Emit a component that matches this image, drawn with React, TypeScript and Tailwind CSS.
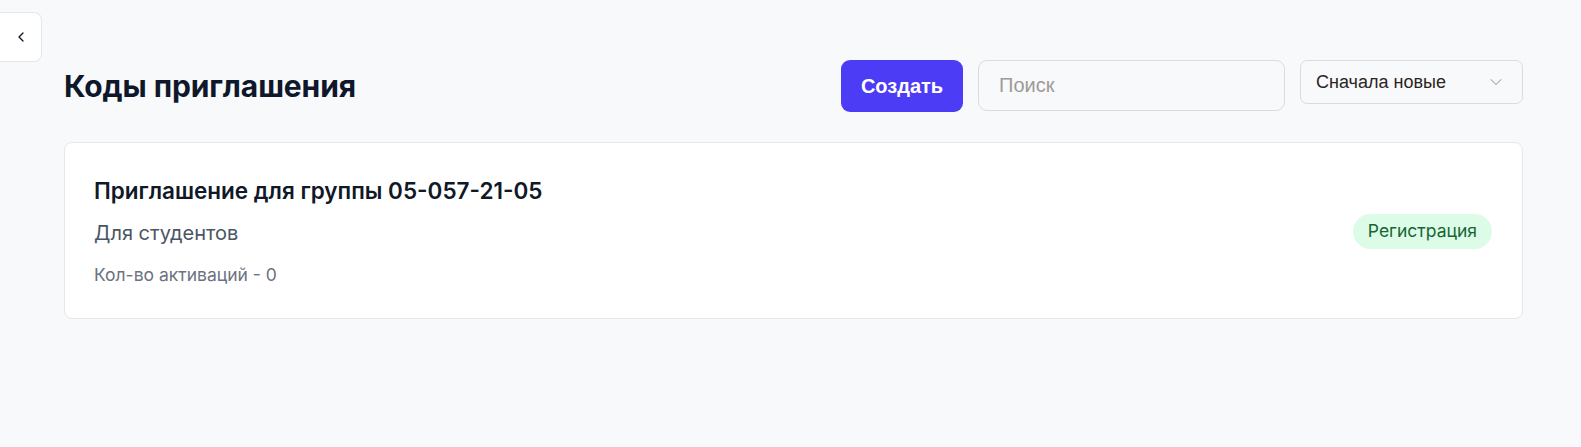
import { ChevronDown, ChevronLeft } from "lucide-react"

export default function App() {
    return (
        <div className="min-h-[447px] w-full bg-[#f8f9fb] relative font-['Inter',sans-serif] text-[#111827]">
            {/* sidebar toggle */}
            <button className="absolute left-0 top-[12px] w-[42px] h-[50px] bg-white border border-l-0 border-[#e5e7eb] rounded-r-[8px] flex items-center justify-center text-[#111827]">
                <ChevronLeft size={16} strokeWidth={2} />
            </button>

            <div className="pl-[64px] pr-[58px] pt-[60px]">
                <div className="flex items-start">
                    <h1 className="text-[30px] font-bold leading-[52px] tracking-[-0.1px] text-[#0f172a]">Коды приглашения</h1>
                    <div className="ml-auto flex items-start gap-[15px]">
                        <button className="w-[122px] h-[52px] rounded-[9px] bg-[#4c3cf6] text-white text-[20px] font-bold font-['Liberation_Sans',sans-serif]">
                            Создать
                        </button>
                        <input
                            placeholder="Поиск"
                            className="w-[307px] h-[51px] rounded-[9px] border border-[#d9dce1] bg-[#f8f9fb] px-[20px] text-[20px] font-['Liberation_Sans',sans-serif] placeholder:text-[#a09a98] outline-none"
                        />
                        <div className="w-[223px] h-[44px] rounded-[7px] border border-[#d9dce1] bg-[#f8f9fb] flex items-center pl-[15px] pr-[16px] font-['Liberation_Sans',sans-serif] text-[18px] text-[#2b2422]">
                            <span>Сначала новые</span>
                            <ChevronDown size={20} strokeWidth={1.25} className="ml-auto text-[#9ca3af]" />
                        </div>
                    </div>
                </div>

                <div className="mt-[30px] h-[177px] bg-white border border-[#e5e7eb] rounded-[8px] pl-[29px] pr-[30px] pt-[2px] flex items-center">
                    <div className="flex flex-col">
                        <div className="text-[22.5px] font-semibold text-[#111827] leading-[28px]">Приглашение для группы 05-057-21-05</div>
                        <div className="mt-[15px] text-[20px] text-[#4b5563] leading-[26px]">Для студентов</div>
                        <div className="mt-[18px] text-[17.5px] text-[#6b7280] leading-[22px]">Кол-во активаций - 0</div>
                    </div>
                    <span className="ml-auto h-[35px] px-[15px] rounded-full bg-[#dcfce7] text-[#166534] text-[17.5px] flex items-center">
                        Регистрация
                    </span>
                </div>
            </div>
        </div>
    )
}
